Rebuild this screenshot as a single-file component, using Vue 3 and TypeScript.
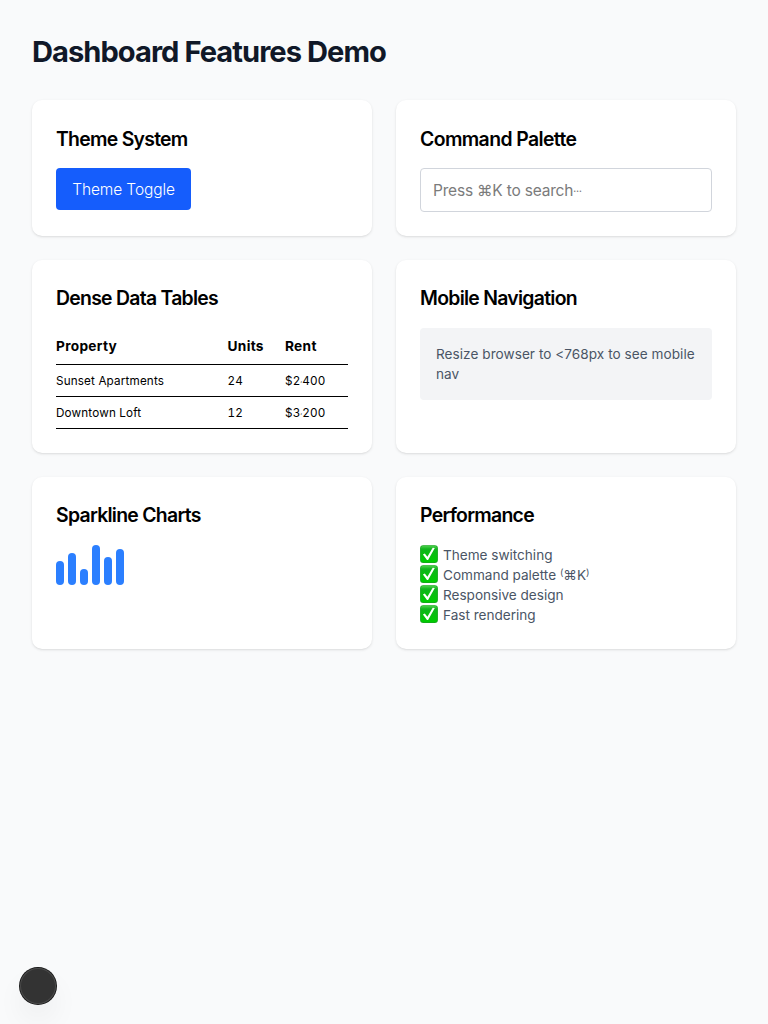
<script setup lang="ts">
interface Row {
  name: string
  units: number
  thousands: string
  rest: string
}

const rows: Row[] = [
  { name: 'Sunset Apartments', units: 24, thousands: '$2', rest: '400' },
  { name: 'Downtown Loft', units: 12, thousands: '$3', rest: '200' },
]

const bars: number[] = [24, 32, 16, 40, 28, 36]

const features: { id: string; text: string; shortcut?: string }[] = [
  { id: 'theme', text: 'Theme switching' },
  { id: 'palette', text: 'Command palette', shortcut: '⌘K' },
  { id: 'responsive', text: 'Responsive design' },
  { id: 'fast', text: 'Fast rendering' },
]
</script>

<template>
  <main class="page">
    <h1><span>Dashboard Features Demo</span></h1>
    <div class="grid">
      <section class="card">
        <h2 class="low">Theme System</h2>
        <button class="toggle"><span>Theme Toggle</span></button>
      </section>

      <section class="card">
        <h2 class="low wide">Command Palette</h2>
        <div class="search" role="searchbox"><span>Press ⌘K to search<span class="dots">…</span></span></div>
      </section>

      <section class="card">
        <h2>Dense Data Tables</h2>
        <div class="table">
          <div class="row head">
            <span>Property</span><span>Units</span><span>Rent</span>
          </div>
          <div v-for="row in rows" :key="row.name" class="row">
            <span>{{ row.name }}</span>
            <span>{{ row.units }}</span>
            <span>{{ row.thousands }}<span class="sep">,</span>{{ row.rest }}</span>
          </div>
        </div>
      </section>

      <section class="card">
        <h2>Mobile Navigation</h2>
        <div class="note">Resize browser to &lt;768px to see mobile nav</div>
      </section>

      <section class="card">
        <h2>Sparkline Charts</h2>
        <div class="bars">
          <div v-for="(h, i) in bars" :key="i" class="bar" :style="{ height: h + 'px' }"></div>
        </div>
      </section>

      <section class="card last">
        <h2>Performance</h2>
        <ul class="features">
          <li v-for="f in features" :key="f.id">
            <svg class="check" viewBox="0 0 18 18" aria-hidden="true">
              <defs>
                <linearGradient :id="'g-' + f.id" x1="0" y1="0" x2="0" y2="1">
                  <stop offset="0" stop-color="#4ccf4c" />
                  <stop offset=".2" stop-color="#10b41c" />
                  <stop offset="1" stop-color="#00cc00" />
                </linearGradient>
              </defs>
              <rect x=".1" y=".2" width="17.8" height="17.7" rx="3.2" fill="#16a51d" />
              <rect x=".8" y=".8" width="16.4" height="16.4" rx="2.6" :fill="`url(#g-${f.id})`" />
              <path d="M2.9 9.4 4.8 8.4 7.4 11.8 12.7 2.7 14.8 2.9 8.1 15.1 7 15.1Z" fill="#fff" />
            </svg>
            <span class="label">{{ f.text }}<template v-if="f.shortcut">&nbsp;<span class="paren">(</span>{{ f.shortcut }}<span class="paren">)</span></template></span>
          </li>
        </ul>
      </section>
    </div>
    <div class="fab"></div>
  </main>
</template>

<style>
body {
  margin: 0;
  background: #f9fafb;
}
</style>

<style scoped>
.page {
  box-sizing: border-box;
  min-height: 100vh;
  padding: 32px;
  background: #f9fafb;
  font-family: Inter, "Liberation Sans", sans-serif;
  color: #000;
}
h1 {
  box-sizing: border-box;
  height: 36px;
  margin: 0 0 32px;
  padding-top: 2px;
  font-size: 29.1px;
  line-height: 36px;
  font-weight: 700;
  letter-spacing: -0.96px;
  color: #101828;
}
h2 {
  margin: 0 0 16px;
  font-size: 19.4px;
  line-height: 28px;
  font-weight: 600;
  letter-spacing: -0.72px;
  white-space: nowrap;
}
h2.low {
  box-sizing: border-box;
  height: 28px;
  padding-top: 1px;
}
h2.wide {
  letter-spacing: -0.6px;
}
.grid {
  display: grid;
  grid-template-columns: 1fr 1fr;
  gap: 24px;
}
.card {
  box-sizing: border-box;
  min-width: 0;
  padding: 24px;
  border-radius: 10px;
  background: #fff;
  box-shadow: 0 1px 3px rgba(0, 0, 0, 0.1), 0 1px 2px -1px rgba(0, 0, 0, 0.1);
}
.last {
  height: 172px;
}
.toggle {
  display: flex;
  align-items: center;
  justify-content: center;
  box-sizing: border-box;
  width: 135px;
  height: 42px;
  padding: 2px 0 0;
  border: 0;
  border-radius: 4px;
  background: #155dfc;
  color: #fff;
  font: 360 15.5px/24px Inter, sans-serif;
  letter-spacing: -0.11px;
  white-space: nowrap;
}
.search {
  display: flex;
  align-items: center;
  box-sizing: border-box;
  height: 44px;
  padding: 0 12px;
  border: 1px solid #d1d5dc;
  border-radius: 4px;
  font-size: 15.5px;
  font-weight: 370;
  letter-spacing: -0.2px;
  color: #7b7b7b;
  white-space: nowrap;
}
.dots {
  position: relative;
  top: -4px;
  font-size: 9px;
  font-weight: 600;
  letter-spacing: -0.5px;
}
.row {
  display: grid;
  grid-template-columns: 171.5px 57.5px 1fr;
  box-sizing: border-box;
  height: 32px;
  border-bottom: 1px solid #000;
  font-size: 11.7px;
  letter-spacing: 0.16px;
  line-height: 33px;
  font-variant-numeric: tabular-nums;
  white-space: nowrap;
}
.head {
  height: 37px;
  font-size: 13.7px;
  font-weight: 700;
  letter-spacing: 0.3px;
  line-height: 36px;
}
.sep {
  position: relative;
  top: -3px;
  font-size: 6px;
}
.note {
  padding: 16px;
  border-radius: 4px;
  background: #f3f4f6;
  color: #4a5565;
  font-size: 13.6px;
  letter-spacing: 0.04px;
  line-height: 20px;
}
.bars {
  display: flex;
  align-items: flex-end;
  gap: 4px;
  height: 40px;
}
.bar {
  width: 8px;
  border-radius: 4px;
  background: #2b7fff;
}
.features {
  margin: 0;
  padding: 0;
  list-style: none;
  font-size: 13.6px;
  letter-spacing: -0.02px;
  line-height: 20px;
  color: #4a5565;
}
.features li {
  display: flex;
  height: 20px;
  gap: 5px;
}
.check {
  width: 18px;
  height: 18px;
  flex: none;
}
.label {
  white-space: nowrap;
}
.paren {
  position: relative;
  top: -4px;
  font-size: 9.5px;
}
.fab {
  position: fixed;
  left: 20px;
  bottom: 20px;
  width: 36px;
  height: 36px;
  border-radius: 50%;
  background: #333;
  box-shadow: 0 0 0 1px #171717, inset 0 0 0 1px #4a4a4a, 0 16px 32px -8px rgba(0, 0, 0, 0.16);
}
</style>
